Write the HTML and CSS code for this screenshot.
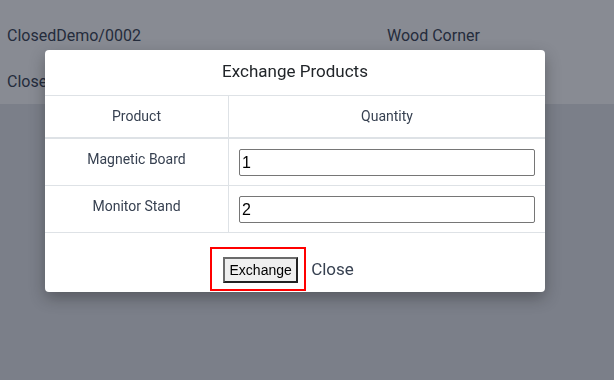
FILE: index.html
```html
<!DOCTYPE html>
<html lang="en">
<head>
    <meta charset="UTF-8">
    <meta name="viewport" content="width=device-width, initial-scale=1.0">
    <title>Exchange Products</title>
    <link rel="stylesheet" href="styles.css">
</head>
<body>
    <div class="order-list">
        <div class="order-row">
            <span>ClosedDemo/0002</span>
            <span>Wood Corner</span>
        </div>
        <div class="order-row">
            <span>ClosedDemo/0001</span>
            <span>Deco Addict</span>
        </div>
    </div>

    <div class="overlay">
        <div class="modal">
            <div class="modal-header">Exchange Products</div>
            <table class="exchange-table">
                <thead>
                    <tr>
                        <th>Product</th>
                        <th>Quantity</th>
                    </tr>
                </thead>
                <tbody>
                    <tr>
                        <td>Magnetic Board</td>
                        <td><input type="number" class="qty-input" value="1"></td>
                    </tr>
                    <tr>
                        <td>Monitor Stand</td>
                        <td><input type="number" class="qty-input" value="2"></td>
                    </tr>
                </tbody>
            </table>
            <div class="modal-footer">
                <div class="highlight">
                    <button class="exchange-btn">Exchange</button>
                </div>
                <span class="close-link">Close</span>
            </div>
        </div>
    </div>
</body>
</html>
```

FILE: styles.css
```css
body {
    margin: 0;
    font-family: Roboto, "Noto Sans", sans-serif;
    background-color: #e5e7eb;
    color: #374151;
    height: 100vh;
}
.order-list {
    background: white;
    padding-top: 12px;
}
.order-row {
    display: grid;
    grid-template-columns: 380px 1fr;
    height: 46px;
    align-items: center;
    padding: 0 7px;
    font-size: 16px;
}
.overlay {
    position: fixed;
    inset: 0;
    background: rgba(17, 24, 39, 0.5);
}
.modal {
    width: 500px;
    margin: 50px 0 0 45px;
    background: white;
    border-radius: 4px;
    box-shadow: 0 6px 16px rgba(0, 0, 0, 0.3);
    overflow: hidden;
}
.modal-header {
    text-align: center;
    font-size: 17px;
    color: #212529;
    line-height: 21px;
    padding: 11px 0 13px;
    border-bottom: 1px solid #dee2e6;
}
.exchange-table {
    width: 100%;
    border-collapse: collapse;
    font-size: 14px;
    line-height: 21px;
}
.exchange-table th,
.exchange-table td {
    padding: 10px 10px 9px;
    text-align: center;
    vertical-align: top;
    font-weight: normal;
    border-bottom: 1px solid #dee2e6;
}
.exchange-table th {
    border-bottom-width: 2px;
    padding: 10px;
}
.exchange-table th:first-child,
.exchange-table td:first-child {
    width: 163px;
    border-right: 1px solid #dee2e6;
}
.qty-input {
    display: block;
    width: 100%;
    height: 27px;
    box-sizing: border-box;
    border: 1px solid #767676;
    border-radius: 2px;
    padding: 1px 2px;
    font-family: "Liberation Sans", Arial, sans-serif;
    font-size: 16px;
    color: black;
    -moz-appearance: textfield;
}
.qty-input::-webkit-inner-spin-button,
.qty-input::-webkit-outer-spin-button {
    -webkit-appearance: none;
    margin: 0;
}
.modal-footer {
    display: flex;
    justify-content: center;
    align-items: center;
    gap: 5px;
    padding: 14px 26px 1px 0;
}
.highlight {
    border: 2px solid red;
    padding: 8px 6px 6px 11px;
}
.exchange-btn {
    display: block;
    width: 75px;
    height: 26px;
    box-sizing: border-box;
    background: #efefef;
    border: 2px solid;
    border-color: #6b6b6b #222 #222 #6b6b6b;
    font-family: "Liberation Sans", Arial, sans-serif;
    font-size: 14px;
    color: black;
    padding: 0;
    cursor: pointer;
}
.close-link {
    font-size: 17px;
    color: #374151;
    cursor: pointer;
}
```
